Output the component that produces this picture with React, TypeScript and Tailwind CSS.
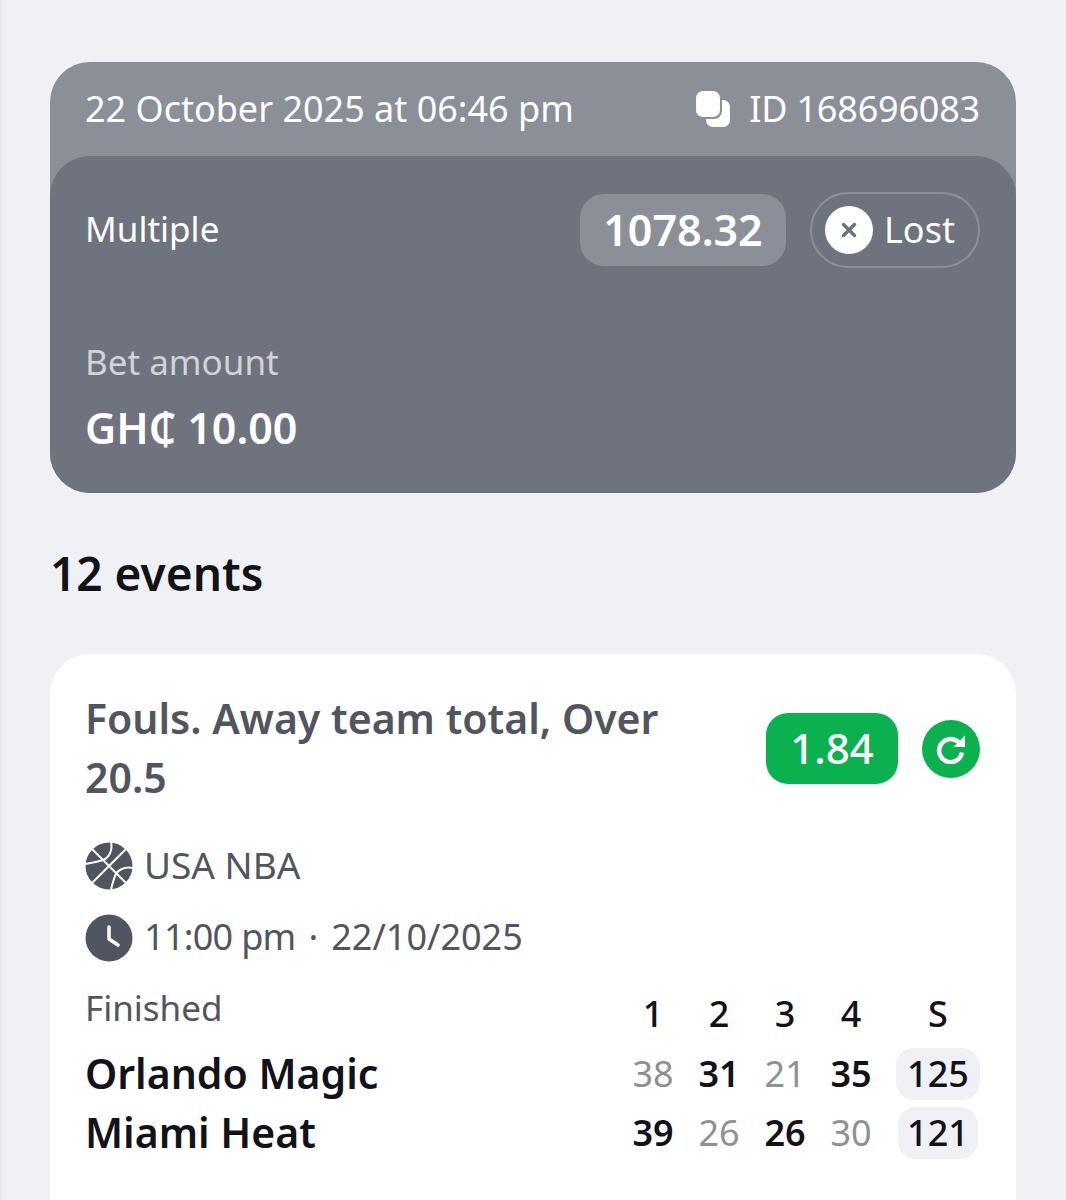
const font = { fontFamily: '"Noto Sans", sans-serif' };

function CopyIcon() {
  return (
    <svg width="36" height="36" viewBox="0 0 36 36" aria-hidden>
      <rect x="11" y="9" width="24" height="27" rx="7" fill="#fff" />
      <rect x="0" y="-1" width="27" height="29" rx="8" fill="#8b8f98" />
      <rect x="1" y="0" width="24" height="26" rx="7" fill="#fff" />
    </svg>
  );
}

function BallIcon() {
  return (
    <svg width="48" height="48" viewBox="0 0 48 48" aria-hidden>
      <circle cx="24" cy="24" r="23.5" fill="#50555f" />
      <g fill="none" stroke="#fff" strokeWidth="2">
        <path d="M7 7l34 34" />
        <path d="M41 7L7 41" />
        <path d="M26 0c2 8-2 16-8 18S6 21 0 22" />
        <path d="M48 26c-8-2-16 2-18 8s-3 8-4 14" />
      </g>
    </svg>
  );
}

function ClockIcon() {
  return (
    <svg width="48" height="48" viewBox="0 0 48 48" aria-hidden>
      <circle cx="24" cy="24" r="23.5" fill="#50555f" />
      <path d="M24 13v12l9 6" fill="none" stroke="#fff" strokeWidth="3.5" strokeLinecap="round" strokeLinejoin="round" />
    </svg>
  );
}

function RefreshIcon() {
  return (
    <svg width="30" height="30" viewBox="0 0 30 30" aria-hidden>
      <path d="M22.5 8.2A11.5 11.5 0 1 0 26 18.5" fill="none" stroke="#fff" strokeWidth="4.5" />
      <path d="M29 1.5v11.5H17.5z" fill="#fff" />
    </svg>
  );
}

const scores = [
  { name: 'Orlando Magic', cols: [['38', false], ['31', true], ['21', false], ['35', true]], total: '125', w: 'w-[84px]' },
  { name: 'Miami Heat', cols: [['39', true], ['26', false], ['26', true], ['30', false]], total: '121', w: 'w-[80px]' },
] as const;

export default function App() {
  return (
    <div style={font} className="h-[1200px] overflow-hidden border-l-2 border-[#e6e8ec] bg-[#eff1f5] pl-[48px] pr-[50px] pt-[62px]">
      <section className="h-[431px] overflow-hidden rounded-[40px] bg-[#8b8f98] text-white">
        <div className="flex h-[94px] items-start justify-between pl-[35px] pr-9 pt-6">
          <span className="text-[36px] leading-[46px]">22 October 2025 at 06:46 pm</span>
          <span className="flex items-center gap-[18px] text-[36px] leading-[46px] tracking-[-0.2px]">
            <CopyIcon />
            ID 168696083
          </span>
        </div>
        <div className="h-[337px] rounded-t-[40px] bg-[#6f737e] pl-[35px] pr-9">
          <div className="flex items-center justify-between pt-9">
            <span className="pb-[2px] text-[35px] leading-[46px]">Multiple</span>
            <div className="flex items-center gap-[24px]">
              <span className="flex h-[72px] w-[206px] items-center justify-center rounded-[24px] bg-[#8b8f98] text-[43px] font-semibold">1078.32</span>
              <span className="flex h-[76px] w-[170px] items-center gap-[11px] rounded-full border-2 border-[#8b8f98] pl-[13px] text-[36px]">
                <span className="flex h-[48px] w-[48px] items-center justify-center rounded-full bg-white">
                  <svg width="18" height="18" viewBox="0 0 18 18" aria-hidden>
                    <path d="M3.5 3.5l11 11M14.5 3.5l-11 11" stroke="#6f737e" strokeWidth="3.5" strokeLinecap="round" />
                  </svg>
                </span>
                Lost
              </span>
            </div>
          </div>
          <p className="mt-[71px] text-[35px] leading-[46px] text-[#d2d4d8]">Bet amount</p>
          <p className="mt-[16px] text-[43px] font-semibold leading-[54px]">GH₵ 10.00</p>
        </div>
      </section>

      <h2 className="mt-[50px] text-[46px] font-semibold leading-[60px] text-[#111318]">12 events</h2>

      <section className="mt-[51px] h-[600px] rounded-[40px] bg-white pl-[35px] pr-9 pt-[35px]">
        <div className="flex items-start justify-between">
          <h3 className="w-[620px] text-[41px] font-semibold leading-[59px] text-[#50555f]">Fouls. Away team total, Over 20.5</h3>
          <div className="mt-[24px] flex items-center gap-[24px]">
            <span className="flex h-[71px] w-[132px] items-center justify-center rounded-[22px] bg-[#0bb14f] pb-[2px] text-[42px] font-medium text-white">1.84</span>
            <span className="flex h-[58px] w-[58px] items-center justify-center rounded-full bg-[#0bb14f]">
              <RefreshIcon />
            </span>
          </div>
        </div>
        <div className="mt-[35px] flex items-center gap-[11px] text-[37px] leading-[46px] text-[#50555f]">
          <BallIcon />
          <span className="pb-[2px]">USA NBA</span>
        </div>
        <div className="mt-[24px] flex items-center gap-[11px] text-[36px] leading-[46px] text-[#50555f]">
          <ClockIcon />
          <span className="pb-[2px] tracking-[-0.7px]">11:00 pm</span>
          <span className="mx-[2px] pb-[2px]">·</span>
          <span className="pb-[2px]">22/10/2025</span>
        </div>
        <div className="mt-[23px] flex items-start justify-between">
          <span className="text-[35px] leading-[46px] text-[#50555f]">Finished</span>
          <div className="mt-[6px] flex text-center text-[36px] font-medium leading-[46px] text-[#111318]">
            <span className="w-[66px]">1</span>
            <span className="w-[66px]">2</span>
            <span className="w-[66px]">3</span>
            <span className="w-[66px]">4</span>
            <span className="w-[96px] pl-[12px]">S</span>
          </div>
        </div>
        <div className="mt-[11px]">
          {scores.map((row) => (
            <div key={row.name} className="mb-[7px] flex h-[52px] items-center justify-between">
              <span className="text-[41px] font-semibold text-[#111318]">{row.name}</span>
              <div className="flex items-center text-center text-[36px]">
                {row.cols.map(([val, bold], i) => (
                  <span key={i} className={bold ? 'w-[66px] font-semibold text-[#111318]' : 'w-[66px] text-[#8e9095]'}>{val}</span>
                ))}
                <span className="flex w-[96px] justify-center pl-[12px]">
                  <span className={`flex h-[52px] ${row.w} shrink-0 items-center justify-center rounded-[18px] bg-[#eff1f5] font-medium text-[#111318]`}>{row.total}</span>
                </span>
              </div>
            </div>
          ))}
        </div>
      </section>
    </div>
  );
}
